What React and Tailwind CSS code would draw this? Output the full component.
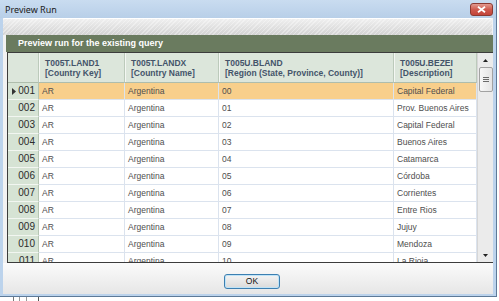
import React from "react";

const rows = [
  ["001", "AR", "Argentina", "00", "Capital Federal"],
  ["002", "AR", "Argentina", "01", "Prov. Buenos Aires"],
  ["003", "AR", "Argentina", "02", "Capital Federal"],
  ["004", "AR", "Argentina", "03", "Buenos Aires"],
  ["005", "AR", "Argentina", "04", "Catamarca"],
  ["006", "AR", "Argentina", "05", "Córdoba"],
  ["007", "AR", "Argentina", "06", "Corrientes"],
  ["008", "AR", "Argentina", "07", "Entre Rios"],
  ["009", "AR", "Argentina", "08", "Jujuy"],
  ["010", "AR", "Argentina", "09", "Mendoza"],
  ["011", "AR", "Argentina", "10", "La Rioja"],
];

const widths = ["w-[86px]", "w-[94px]", "w-[175px]", "w-[83px]"];

export default function App() {
  return (
    <div className="w-[499px] h-[301px] bg-white overflow-hidden flex flex-col" style={{ fontFamily: '"Liberation Sans", Arial, sans-serif' }}>
      <div className="w-[497px] h-[297px] shrink-0 flex flex-col bg-[#bcd3ec] border-r border-b border-[#5d7a98]">
        {/* Title bar */}
        <div className="h-[18px] shrink-0 flex items-start justify-between pl-[5px] pr-[3px] bg-gradient-to-b from-[#c9dcf0] to-[#b8cfe8]">
          <span className="text-[9px] leading-[9px] mt-[5px] text-[#1a1a1a]" style={{ fontFamily: '"Noto Sans", "Liberation Sans", sans-serif' }}>Preview Run</span>
          <div className="mt-[3px] w-[23px] h-[13px] rounded-[3px] border border-[#8b3a32] bg-gradient-to-b from-[#e19a90] via-[#cf5a4e] to-[#c2443a] flex items-center justify-center">
            <svg width="9" height="7" viewBox="0 0 9 7">
              <path d="M1 0.8 L8 6.2 M8 0.8 L1 6.2" stroke="#ffffff" strokeWidth="1.8" />
            </svg>
          </div>
        </div>
        {/* Body */}
        <div className="flex-1 flex flex-col pl-[3px] pr-[3px]">
          <div className="flex-1 flex flex-col bg-[#f2f2f2]">
            {/* Gray strip */}
            <div className="h-[17px] shrink-0 border-t border-white rounded-t-[2px] bg-gradient-to-b from-[#eeeeee] via-[#e2e2e2] to-[#d2d2d2] mr-[1px]" style={{ backgroundImage: "repeating-linear-gradient(135deg, rgba(255,255,255,0.35) 0 1px, transparent 1px 3px), linear-gradient(#efefef, #d3d3d3)" }} />
            <div className="flex flex-col pl-[3px]">
              {/* Green bar */}
              <div className="h-[17px] shrink-0 bg-[#6a7b5f] flex items-center pl-[12px]">
                <span className="text-[9px] font-bold text-white leading-none">Preview run for the existing query</span>
              </div>
              {/* Grid */}
              <div className="ml-[1px] h-[211px] shrink-0 flex border-t border-l border-b border-[#3c3c3c] border-r-0 bg-white overflow-hidden">
                <div className="flex flex-col w-[469px] shrink-0 overflow-hidden">
                  {/* Header */}
                  <div className="flex h-[30px] shrink-0 bg-[#dce6db]">
                    <div className="w-[31px] shrink-0 border-r border-[#bccabb] border-b border-b-[#aebdac]" />
                    {[["T005T.LAND1", "[Country Key]"], ["T005T.LANDX", "[Country Name]"], ["T005U.BLAND", "[Region (State, Province, County)]"], ["T005U.BEZEI", "[Description]"]].map((h, i) => (
                      <div key={i} className={`${widths[i]} shrink-0 border-r border-[#bccabb] border-b border-b-[#aebdac] flex flex-col justify-center pl-[6px] text-[8.5px] font-bold leading-[10px] text-[#44546a]`} style={{ boxShadow: "inset 1px 0 0 #f4f7f3" }}>
                        <span>{h[0]}</span>
                        <span>{h[1]}</span>
                      </div>
                    ))}
                  </div>
                  {rows.map((r, idx) => {
                    const sel = idx === 0;
                    return (
                      <div key={r[0]} className={`flex h-[17px] shrink-0 ${sel ? "bg-[#f8cf8b]" : "bg-white"}`}>
                        <div className="w-[31px] shrink-0 bg-[#d6e3d4] border-r border-[#b5c5b3] border-b border-b-[#f2f6f1] flex items-center justify-between pl-[4px] pr-[3px]">
                          {sel ? (
                            <svg width="4" height="7" viewBox="0 0 4 7"><path d="M0 0 L4 3.5 L0 7 Z" fill="#333" /></svg>
                          ) : <span />}
                          <span className="text-[10px] leading-none text-[#2b2b2b]">{r[0]}</span>
                        </div>
                        {r.slice(1).map((c, i) => (
                          <div key={i} className={`${widths[i]} shrink-0 border-r border-b border-[#dbe3ee] flex items-center pl-[3px] text-[8.5px] leading-none text-[#4e4e4e]`}>
                            {c}
                          </div>
                        ))}
                      </div>
                    );
                  })}
                </div>
                {/* Scrollbar */}
                <div className="w-[16px] shrink-0 bg-[#ebebeb] border-l border-[#d6d6d6] flex flex-col items-center">
                  <div className="h-[14px] w-full flex items-center justify-center">
                    <svg width="5" height="3" viewBox="0 0 5 3"><path d="M0 3 L2.5 0 L5 3 Z" fill="#222" /></svg>
                  </div>
                  <div className="w-[14px] h-[25px] rounded-[2px] border border-[#a2a2a2] bg-gradient-to-r from-[#f7f7f7] to-[#e4e4e4] flex flex-col items-center justify-center gap-[1px]">
                    <div className="w-[6px] h-[1px] bg-[#6a6a6a]" />
                    <div className="w-[6px] h-[1px] bg-[#6a6a6a]" />
                    <div className="w-[6px] h-[1px] bg-[#6a6a6a]" />
                  </div>
                  <div className="flex-1" />
                  <div className="h-[14px] w-full flex items-center justify-center">
                    <svg width="5" height="3" viewBox="0 0 5 3"><path d="M0 0 L2.5 3 L5 0 Z" fill="#222" /></svg>
                  </div>
                </div>
                <div className="w-[1px] shrink-0 bg-[#8c8c8c]" />
              </div>
            </div>
            {/* Bottom area */}
            <div className="flex-1 bg-gradient-to-b from-[#fbfbfb] to-[#e6e6e6] flex items-start pl-[221px] pt-[11px]">
              <div className="w-[56px] h-[15px] rounded-[3px] border border-[#3c7fb1] bg-gradient-to-b from-[#f4f4f4] to-[#dadada] flex items-center justify-center" style={{ boxShadow: "inset 0 0 0 1px #bfe3f7" }}>
                <span className="text-[8.5px] leading-none text-[#111]">OK</span>
              </div>
            </div>
          </div>
        </div>
        <div className="h-[2px] shrink-0" />
      </div>
      <div className="flex-1 relative">
        <div className="absolute left-[13px] top-0 w-[1px] h-[4px] bg-[#777]" />
        <div className="absolute left-[19px] top-0 w-[1px] h-[4px] bg-[#999]" />
        <div className="absolute left-[26px] top-0 w-[1px] h-[4px] bg-[#999]" />
        <div className="absolute left-[38px] top-0 w-[1px] h-[4px] bg-[#555]" />
      </div>
    </div>
  );
}
